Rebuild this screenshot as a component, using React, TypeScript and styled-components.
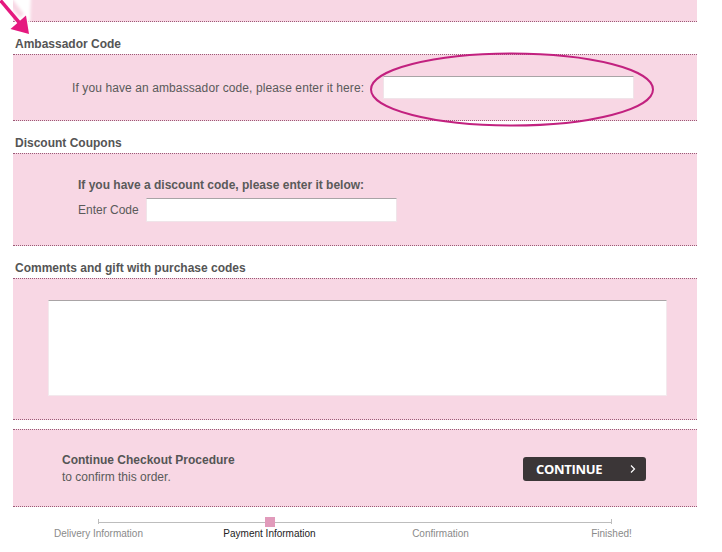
import React from "react";
import styled, { createGlobalStyle } from "styled-components";

const GlobalStyle = createGlobalStyle`
  html, body { margin: 0; padding: 0; background: #ffffff; }
  body { font-family: Arial, "Liberation Sans", sans-serif; color: #555; }
  * { box-sizing: border-box; }
`;

const PINK = "#f8d7e4";
const DOT = "1px dotted #9b5a76";

const Page = styled.div`
  position: relative;
  width: 684px;
  margin-left: 13px;
`;

const Panel = styled.div`
  position: relative;
  background: ${PINK};
  border-top: ${DOT};
  border-bottom: ${DOT};
`;

const TopPanel = styled(Panel)`
  height: 22px;
  border-top: none;
`;

const SectionTitle = styled.h3`
  margin: 0;
  padding: 15px 0 3px 2px;
  font-size: 12px;
  line-height: 14px;
  font-weight: bold;
  color: #555;
`;

const AmbRow = styled.div`
  display: flex;
  align-items: center;
  height: 65px;
  padding-left: 59px;
  gap: 19px;
  font-size: 12px;
  color: #5a5a5a;
  span { letter-spacing: 0.1px; }
`;

const Field = styled.input<{ $w: number; $h: number }>`
  width: ${(p) => p.$w}px;
  height: ${(p) => p.$h}px;
  background: #fff;
  border: 1px solid #f0e4e9;
  border-top: 1px solid #a9a4a6;
  padding: 0 4px;
  margin: 0;
  outline: none;
  font: 12px Arial, "Liberation Sans", sans-serif;
`;

const Ellipse = styled.svg`
  position: absolute;
  left: 357px;
  top: -3px;
  pointer-events: none;
`;

const DiscountBody = styled.div`
  padding: 24px 0 23px 65px;
  display: flex;
  flex-direction: column;
  gap: 6px;
  font-size: 12px;
  color: #5a5a5a;
`;

const Lead = styled.div`
  font-weight: bold;
  line-height: 14px;
`;

const CodeRow = styled.div`
  display: flex;
  align-items: center;
  gap: 7px;
`;

const CommentsBody = styled.div`
  padding: 21px 30px 23px 35px;
`;

const TextArea = styled.textarea`
  display: block;
  width: 619px;
  height: 96px;
  resize: none;
  background: #fff;
  border: 1px solid #f3e9ed;
  border-top: 1px solid #a9a4a6;
  margin: 0;
  outline: none;
`;

const Spacer = styled.div`
  height: 9px;
`;

const ContinueRow = styled.div`
  height: 76px;
  display: flex;
  align-items: center;
  justify-content: space-between;
  padding: 2px 51px 0 49px;
`;

const ContinueText = styled.div`
  font-size: 12px;
  line-height: 17px;
  color: #5a5a5a;
  b { color: #555; }
`;

const ContinueButton = styled.button`
  width: 123px;
  height: 24px;
  border: none;
  border-radius: 3px;
  background: #3b3637;
  color: #fff;
  display: flex;
  align-items: center;
  justify-content: space-between;
  padding: 0 9px 0 13px;
  font-family: "Open Sans", Arial, sans-serif;
  font-weight: 700;
  font-size: 13px;
  letter-spacing: -0.3px;
  cursor: pointer;
`;

const Steps = styled.div`
  position: relative;
  display: grid;
  grid-template-columns: repeat(4, 1fr);
  padding-top: 10px;
  &::before {
    content: "";
    position: absolute;
    left: 12.5%;
    right: 12.5%;
    top: 15px;
    border-top: 1px solid #bdbdbd;
  }
`;

const Step = styled.div`
  position: relative;
  display: flex;
  flex-direction: column;
  align-items: center;
`;

const Marker = styled.div<{ $active?: boolean; $tick?: boolean }>`
  position: relative;
  width: 10px;
  height: 10px;
  background: ${(p) => (p.$active ? "#e19bbb" : "transparent")};
  ${(p) =>
    p.$tick
      ? `&::after{content:"";position:absolute;left:4px;top:2px;height:5px;border-left:1px solid #bdbdbd;}`
      : ""}
`;

const StepLabel = styled.div<{ $active?: boolean }>`
  margin-top: 1px;
  font-size: 10px;
  line-height: 12px;
  color: ${(p) => (p.$active ? "#222" : "#8a8a8a")};
  white-space: nowrap;
`;

const Arrow = styled.svg`
  position: absolute;
  left: 0;
  top: 0;
  pointer-events: none;
`;

const steps = [
  { label: "Delivery Information", tick: true },
  { label: "Payment Information", active: true },
  { label: "Confirmation" },
  { label: "Finished!", tick: true },
];

export default function App() {
  return (
    <>
      <GlobalStyle />
      <Page>
        <TopPanel />
        <SectionTitle>Ambassador Code</SectionTitle>
        <Panel>
          <AmbRow>
            <span>If you have an ambassador code, please enter it here:</span>
            <Field $w={251} $h={23} />
          </AmbRow>
          <Ellipse width="290" height="78" viewBox="0 0 290 78">
            <ellipse cx="142" cy="37.5" rx="141" ry="36" fill="none" stroke="#c2217f" strokeWidth="2" />
          </Ellipse>
        </Panel>
        <SectionTitle>Discount Coupons</SectionTitle>
        <Panel>
          <DiscountBody>
            <Lead>If you have a discount code, please enter it below:</Lead>
            <CodeRow>
              <span>Enter Code</span>
              <Field $w={251} $h={24} />
            </CodeRow>
          </DiscountBody>
        </Panel>
        <SectionTitle>Comments and gift with purchase codes</SectionTitle>
        <Panel>
          <CommentsBody>
            <TextArea />
          </CommentsBody>
        </Panel>
        <Spacer />
        <Panel>
          <ContinueRow>
            <ContinueText>
              <b>Continue Checkout Procedure</b>
              <br />
              to confirm this order.
            </ContinueText>
            <ContinueButton>
              <span>CONTINUE</span>
              <svg width="8" height="10" viewBox="0 0 8 10">
                <path d="M2 1.5 L5.5 5 L2 8.5" fill="none" stroke="#fff" strokeWidth="1.2" />
              </svg>
            </ContinueButton>
          </ContinueRow>
        </Panel>
        <Steps>
          {steps.map((s) => (
            <Step key={s.label}>
              <Marker $active={s.active} $tick={s.tick} />
              <StepLabel $active={s.active}>{s.label}</StepLabel>
            </Step>
          ))}
        </Steps>
      </Page>
      <Arrow width="44" height="44" viewBox="0 0 44 44">
        <defs>
          <filter id="glow" x="-50%" y="-50%" width="200%" height="200%">
            <feGaussianBlur stdDeviation="1.8" />
          </filter>
        </defs>
        <path d="M10 -4 L31 -4 L30 22 Z" fill="#fff" filter="url(#glow)" />
        <g stroke="#fff" strokeWidth="4" fill="#fff" strokeLinejoin="round" filter="url(#glow)">
          <path d="M2 0 L24 26" />
          <path d="M11 29 L29 34 L26 15 Z" />
        </g>
        <path d="M0.5 0.5 L23 27" stroke="#e5197f" strokeWidth="3.5" />
        <path d="M10.5 29 L29 34 L26 15.5 Z" fill="#e5197f" />
      </Arrow>
    </>
  );
}
